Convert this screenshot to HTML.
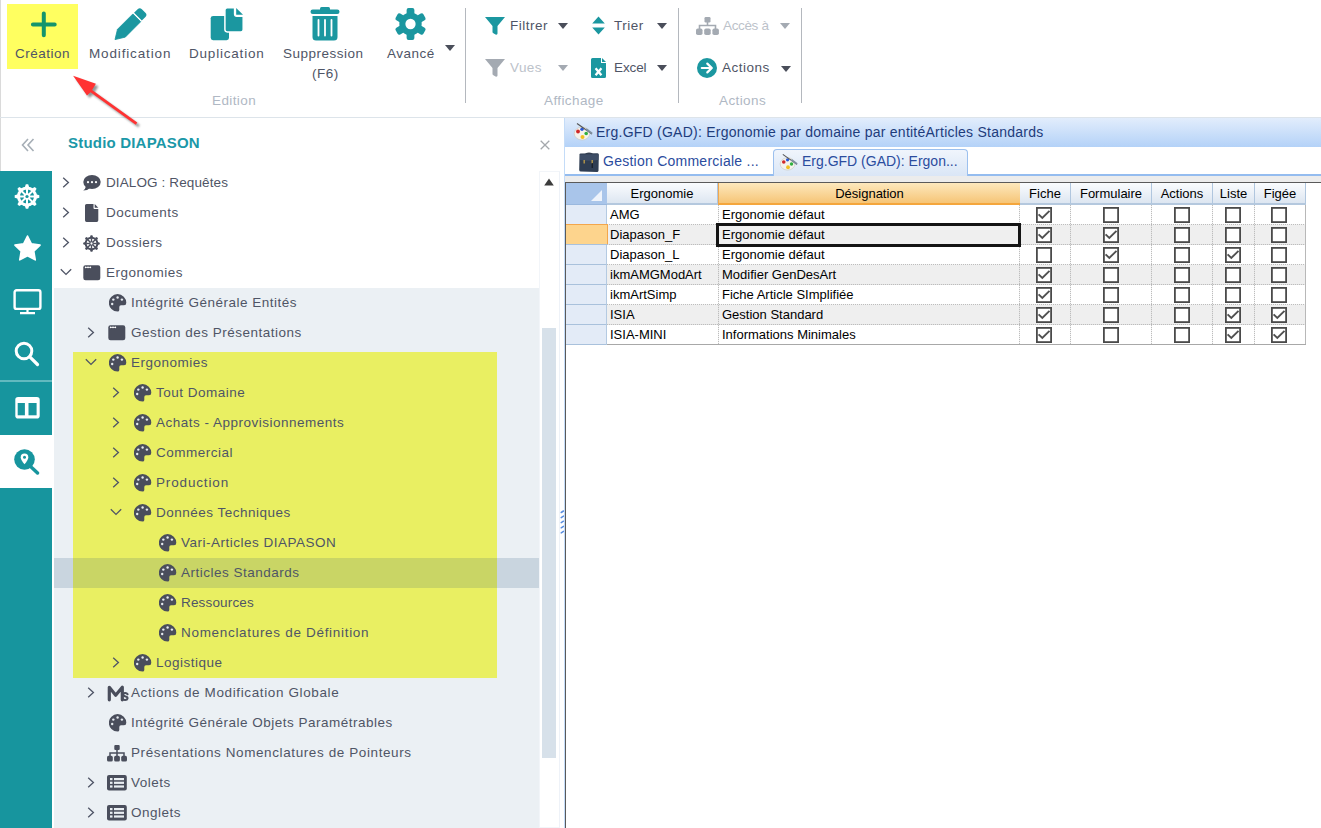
<!DOCTYPE html>
<html><head><meta charset="utf-8">
<style>
*{margin:0;padding:0;box-sizing:border-box}
html,body{width:1321px;height:828px;overflow:hidden;background:#fff;font-family:"Liberation Sans",sans-serif;position:relative}
.a{position:absolute}
.tb{font-size:13.5px;color:#4f5566;letter-spacing:0.5px;white-space:nowrap;line-height:16px}
.tl{font-size:13.5px;color:#b0b8c4;letter-spacing:0.4px;white-space:nowrap;line-height:16px}
.sep{position:absolute;width:1px;background:#b4b8be;top:8px;height:95px}
.car{position:absolute;width:0;height:0;border-left:5.5px solid transparent;border-right:5.5px solid transparent;border-top:6px solid #4a4e5a}
.car.g{border-top-color:#a4aab2}
.tr{position:absolute;left:54px;height:30px;width:485px}
.tt{position:absolute;font-size:13.5px;color:#4f5566;letter-spacing:0.5px;white-space:nowrap;line-height:16px;top:7px}
.ch{position:absolute;top:9px}
.ic{position:absolute;top:6px}
.g{font-size:13px;color:#000;white-space:nowrap;line-height:16px}
.hd{position:absolute;top:183px;height:22px;background:linear-gradient(#fbfcfe,#dfe7f1);border-bottom:2px solid #b4c8de;border-right:1px solid #b4c8de;font-size:13px;text-align:center;line-height:19px;color:#000}
.cb{position:absolute;width:16px;height:16px;border:2px solid #4e4e4e;background:#fff}
.rowbg{position:absolute;left:607px;width:699px;height:20px}
</style></head><body>

<!-- left thin border of toolbar -->
<div class="a" style="left:0;top:0;width:1px;height:171px;background:#dadada"></div>

<!-- Creation highlight -->
<div class="a" style="left:7px;top:4px;width:71px;height:65px;background:#ffff60"></div>

<!-- ===== TOOLBAR ===== -->
<svg class="a" style="left:29px;top:10px" width="30" height="30" viewBox="0 0 30 30">
  <path d="M14.8 3.6V25.3M3.9 14.4H25.7" stroke="#14956c" stroke-width="4" stroke-linecap="round"/>
</svg>
<div class="a tb" style="left:15px;top:46px">Création</div>

<!-- pencil -->
<svg class="a" style="left:114px;top:7px" width="34" height="34" viewBox="0 0 34 34">
  <path d="M1.00 32.60 L3.47 22.35 L18.89 6.93 L26.67 14.71 L11.25 30.13 Z" fill="#1b97a0" stroke="#1b97a0" stroke-width="0.8" stroke-linejoin="round"/>
  <path d="M20.02 5.80 L23.63 2.19 Q25.75 0.07 27.87 2.19 L31.41 5.73 Q33.53 7.85 31.41 9.97 L27.80 13.58 Z" fill="#1b97a0"/>
</svg>
<div class="a tb" style="left:89px;top:46px;letter-spacing:0.85px">Modification</div>

<!-- copy -->
<svg class="a" style="left:210px;top:7px" width="34" height="34" viewBox="0 0 34 34">
  <rect x="0.7" y="8.9" width="18.3" height="24.3" rx="2.4" fill="#1b97a0"/>
  <path d="M17.2 0.7 H24.6 V7 Q24.6 9.2 26.8 9.2 H33.2 V22.6 Q33.2 24.9 31 24.9 H17.2 Q14.9 24.9 14.9 22.6 V3 Q14.9 0.7 17.2 0.7Z" fill="#1b97a0" stroke="#fff" stroke-width="1.5"/>
  <path d="M26.2 1 L33 7.8 H26.2Z" fill="#1b97a0"/>
</svg>
<div class="a tb" style="left:189px;top:46px;letter-spacing:0.8px">Duplication</div>

<!-- trash -->
<svg class="a" style="left:310px;top:7px" width="30" height="34" viewBox="0 0 30 34">
  <rect x="0.5" y="2.5" width="29" height="4.5" rx="2.2" fill="#1b97a0"/>
  <rect x="10" y="0" width="10" height="4" rx="1.5" fill="#1b97a0"/>
  <path d="M2.5 9 H27.5 V30 Q27.5 33.5 24 33.5 H6 Q2.5 33.5 2.5 30Z" fill="#1b97a0"/>
  <path d="M8.5 13 V28.5 M15 13 V28.5 M21.5 13 V28.5" stroke="#fff" stroke-width="1.8" stroke-linecap="round"/>
</svg>
<div class="a tb" style="left:283px;top:46px">Suppression</div>
<div class="a tb" style="left:312px;top:66px">(F6)</div>

<!-- gear -->
<svg class="a" style="left:394px;top:7px" width="33" height="34" viewBox="-17 -17 34 34">
  <g fill="#1b97a0">
    <circle r="11.5"/>
    <g id="tooth"><rect x="-4" y="-16.5" width="8" height="8" rx="2"/></g>
    <use href="#tooth" transform="rotate(60)"/><use href="#tooth" transform="rotate(120)"/>
    <use href="#tooth" transform="rotate(180)"/><use href="#tooth" transform="rotate(240)"/><use href="#tooth" transform="rotate(300)"/>
  </g>
  <circle r="5.3" fill="#fff"/>
</svg>
<div class="a tb" style="left:387px;top:46px">Avancé</div>
<div class="car" style="left:445px;top:45px"></div>

<div class="a tl" style="left:212px;top:93px">Edition</div>
<div class="sep" style="left:465px"></div>

<!-- Affichage group -->
<svg class="a" style="left:485px;top:17px" width="20" height="18" viewBox="0 0 20 18">
  <path d="M0 0 H20 L12.5 9 V16.5 Q12.5 18 10.5 17.5 L8 16 Q7.5 15.6 7.5 15 V9 Z" fill="#1b97a0"/>
</svg>
<div class="a tb" style="left:510px;top:18px">Filtrer</div>
<div class="car" style="left:558px;top:23px"></div>

<svg class="a" style="left:592px;top:16px" width="13" height="19" viewBox="0 0 13 19">
  <path d="M6.5 0.5 L12.8 7.6 H0.2Z M6.5 18.5 L12.8 11.4 H0.2Z" fill="#1b97a0"/>
</svg>
<div class="a tb" style="left:614px;top:18px">Trier</div>
<div class="car" style="left:657px;top:23px"></div>

<svg class="a" style="left:485px;top:59px" width="20" height="18" viewBox="0 0 20 18">
  <path d="M0 0 H20 L12.5 9 V16.5 Q12.5 18 10.5 17.5 L8 16 Q7.5 15.6 7.5 15 V9 Z" fill="#a4aab2"/>
</svg>
<div class="a tl" style="left:510px;top:60px;color:#bcc2ca">Vues</div>
<div class="car g" style="left:558px;top:65px"></div>

<svg class="a" style="left:591px;top:58px" width="15" height="20" viewBox="0 0 15 20">
  <path d="M1.5 0 H10 V5 H15 V18.5 Q15 20 13.5 20 H1.5 Q0 20 0 18.5 V1.5 Q0 0 1.5 0Z" fill="#1b97a0"/>
  <path d="M11 0 L15 4 H11Z" fill="#1b97a0"/>
  <path d="M4.6 10.2 L10.4 17.2 M10.4 10.2 L4.6 17.2" stroke="#fff" stroke-width="2.3"/>
</svg>
<div class="a tb" style="left:614px;top:60px;letter-spacing:-0.1px">Excel</div>
<div class="car" style="left:657px;top:65px"></div>

<div class="a tl" style="left:544px;top:93px">Affichage</div>

<div class="sep" style="left:678px"></div>

<!-- Actions group -->
<svg class="a" style="left:696px;top:17px" width="23" height="18" viewBox="0 0 23 18">
  <g fill="#a4aab2">
    <rect x="8.5" y="0" width="6" height="5.5" rx="1.2"/>
    <path d="M11.5 5 V9 M3.5 12 V8.5 H19.5 V12" stroke="#a4aab2" stroke-width="1.6" fill="none"/>
    <rect x="0" y="11.5" width="6.5" height="6.5" rx="1.8"/>
    <rect x="8.2" y="11.5" width="6.5" height="6.5" rx="1.8"/>
    <rect x="16.4" y="11.5" width="6.5" height="6.5" rx="1.8"/>
  </g>
</svg>
<div class="a tl" style="left:723px;top:18px;color:#bcc2ca;letter-spacing:-0.35px">Accès à</div>
<div class="car g" style="left:780px;top:23px"></div>

<svg class="a" style="left:697px;top:58px" width="20" height="20" viewBox="0 0 20 20">
  <circle cx="10" cy="10" r="10" fill="#1b97a0"/>
  <path d="M4.8 10 H14.5 M10.3 5.6 L14.8 10 L10.3 14.4" stroke="#fff" stroke-width="2.2" fill="none" stroke-linecap="round" stroke-linejoin="round"/>
</svg>
<div class="a tb" style="left:722px;top:60px">Actions</div>
<div class="car" style="left:781px;top:66px"></div>

<div class="a tl" style="left:719px;top:93px">Actions</div>

<div class="sep" style="left:801px"></div>

<!-- horizontal separator -->
<div class="a" style="left:0;top:117px;width:1321px;height:1px;background:#dde4ea"></div>

<!-- ===== LEFT SIDEBAR ===== -->
<div class="a" style="left:0;top:171px;width:52px;height:657px;background:#17959e"></div>
<div class="a" style="left:0;top:380px;width:52px;height:2px;background:#62b9bf"></div>
<div class="a" style="left:0;top:435px;width:52px;height:53px;background:#fff"></div>

<!-- header -->
<svg class="a" style="left:21px;top:138px" width="14" height="14" viewBox="0 0 14 14">
  <path d="M7 1 L1.5 7 L7 13 M12.5 1 L7 7 L12.5 13" stroke="#a6aeb6" stroke-width="1.6" fill="none"/>
</svg>
<div class="a" style="left:68px;top:134px;font-size:15px;font-weight:bold;color:#1b98a8;white-space:nowrap;letter-spacing:0.2px;line-height:18px">Studio DIAPASON</div>
<svg class="a" style="left:540px;top:140px" width="10" height="10" viewBox="0 0 10 10">
  <path d="M0.7 0.7 L9.3 9.3 M9.3 0.7 L0.7 9.3" stroke="#a4a8ac" stroke-width="1.3"/>
</svg>

<!-- TREE placeholder -->

<!-- sidebar icons -->
<svg class="a" style="left:14px;top:183px" width="26" height="27" viewBox="-13 -13.5 26 27">
  <g fill="#fff"><path d="M-2.2 -9 L-1.2 -12.3 H1.2 L2.2 -9Z" transform="rotate(0)"/><path d="M-2.2 -9 L-1.2 -12.3 H1.2 L2.2 -9Z" transform="rotate(45)"/><path d="M-2.2 -9 L-1.2 -12.3 H1.2 L2.2 -9Z" transform="rotate(90)"/><path d="M-2.2 -9 L-1.2 -12.3 H1.2 L2.2 -9Z" transform="rotate(135)"/><path d="M-2.2 -9 L-1.2 -12.3 H1.2 L2.2 -9Z" transform="rotate(180)"/><path d="M-2.2 -9 L-1.2 -12.3 H1.2 L2.2 -9Z" transform="rotate(225)"/><path d="M-2.2 -9 L-1.2 -12.3 H1.2 L2.2 -9Z" transform="rotate(270)"/><path d="M-2.2 -9 L-1.2 -12.3 H1.2 L2.2 -9Z" transform="rotate(315)"/></g>
  <circle r="10" fill="#fff"/><circle r="5.1" fill="none" stroke="#17959e" stroke-width="3.8"/>
  <g stroke="#fff" stroke-width="2"><path d="M0 -2.5 V-7.6" transform="rotate(0)"/><path d="M0 -2.5 V-7.6" transform="rotate(45)"/><path d="M0 -2.5 V-7.6" transform="rotate(90)"/><path d="M0 -2.5 V-7.6" transform="rotate(135)"/><path d="M0 -2.5 V-7.6" transform="rotate(180)"/><path d="M0 -2.5 V-7.6" transform="rotate(225)"/><path d="M0 -2.5 V-7.6" transform="rotate(270)"/><path d="M0 -2.5 V-7.6" transform="rotate(315)"/></g>
  <circle r="1.6" fill="#17959e"/>
</svg>
<svg class="a" style="left:14px;top:235px" width="27" height="27" viewBox="0 0 27 27">
  <path d="M13.50 1.00 L17.38 8.86 L26.05 10.12 L19.78 16.24 L21.26 24.88 L13.50 20.80 L5.74 24.88 L7.22 16.24 L0.95 10.12 L9.62 8.86Z" fill="#fff" stroke="#fff" stroke-width="1.6" stroke-linejoin="round"/>
</svg>
<svg class="a" style="left:13px;top:289px" width="29" height="26" viewBox="0 0 29 26">
  <rect x="1.6" y="1.3" width="25.8" height="18.6" rx="2" fill="none" stroke="#fff" stroke-width="2.4"/>
  <path d="M14.5 20 V23.8 M7 24.2 H22" stroke="#fff" stroke-width="2.2"/>
</svg>
<svg class="a" style="left:14px;top:341px" width="26" height="26" viewBox="0 0 26 26">
  <circle cx="10" cy="10" r="7.8" fill="none" stroke="#fff" stroke-width="3"/>
  <path d="M15.8 15.8 L23.5 23.5" stroke="#fff" stroke-width="3.2" stroke-linecap="round"/>
</svg>
<svg class="a" style="left:15px;top:397px" width="25" height="22" viewBox="0 0 25 22">
  <rect x="0.3" y="0" width="24.4" height="21.5" rx="2.8" fill="#fff"/>
  <rect x="2.7" y="6" width="7.2" height="12.3" fill="#17959e"/><rect x="13.5" y="6" width="8.1" height="12.3" fill="#17959e"/>
</svg>
<svg class="a" style="left:14px;top:449px" width="26" height="26" viewBox="0 0 26 26">
  <circle cx="10.5" cy="10.5" r="10.3" fill="#17959e"/>
  <path d="M15.5 16.5 L23.5 24" stroke="#17959e" stroke-width="3.4" stroke-linecap="round"/>
  <path d="M10.5 4.5 Q14.3 4.5 14.3 8.2 Q14.3 10.8 10.5 15.2 Q6.7 10.8 6.7 8.2 Q6.7 4.5 10.5 4.5Z" fill="#fff"/>
  <circle cx="10.5" cy="8.3" r="1.5" fill="#17959e"/>
</svg>

<!-- scrollbar -->
<div class="a" style="left:539px;top:171px;width:21px;height:657px;border:1px solid #f2f5f9;border-right-color:#eef2f8"></div>
<svg class="a" style="left:544px;top:178px" width="10" height="8" viewBox="0 0 10 8"><path d="M5 0.5 L9.8 7.5 H0.2Z" fill="#3c3c3c"/></svg>
<div class="a" style="left:542px;top:328px;width:14px;height:430px;background:#d7e1ea"></div>
<!-- splitter dots -->
<svg class="a" style="left:560px;top:509px" width="5" height="26" viewBox="0 0 5 26">
  <g stroke="#5a8ee0" stroke-width="1.5" stroke-linecap="round"><path d="M1.2 3.5 L3.5 2"/><path d="M1.2 8.6 L3.5 7.1"/><path d="M1.2 13.7 L3.5 12.2"/><path d="M1.2 18.8 L3.5 17.3"/><path d="M1.2 23.9 L3.5 22.4"/></g>
</svg>

<!-- red arrow -->
<svg class="a" style="left:60px;top:65px" width="90" height="70" viewBox="60 65 90 70">
  <defs><filter id="sh" x="-20%" y="-20%" width="140%" height="140%"><feGaussianBlur stdDeviation="1.2"/></filter></defs>
  <g transform="translate(2.5,2.5)" filter="url(#sh)" opacity="0.55">
    <path d="M73.1 75.7 L95.9 83.8 L92.1 90 L137.3 122.5 L135.7 124.8 L90.5 92.3 L87 95.4Z" fill="#404040"/>
  </g>
  <path d="M73.1 75.7 L95.9 83.8 L92.1 90 L137.3 122.5 L135.7 124.8 L90.5 92.3 L87 95.4Z" fill="#ff3232"/>
</svg>

<!-- TREE START -->
<div class="a" style="left:54px;top:288px;width:485px;height:540px;background:#ebf0f4"></div>
<div class="a" style="left:54px;top:558px;width:485px;height:30px;background:#c9d5df"></div>
<div class="a" style="left:73px;top:352px;width:424px;height:326px;background:#e9ef62"></div>
<div class="a" style="left:73px;top:558px;width:424px;height:30px;background:#c9d565"></div>
<svg class="a" style="left:62px;top:177px" width="8" height="11" viewBox="0 0 8 11"><path d="M1.2 0.8 L6.4 5.5 L1.2 10.2" stroke="#4f5566" stroke-width="1.3" fill="none"/></svg>
<svg class="a" style="left:83px;top:175px" width="18" height="16" viewBox="0 0 18 16"><ellipse cx="9" cy="7" rx="8.7" ry="7" fill="#4a4e5c"/><path d="M3 11 Q2.5 14 0.2 15.6 Q4.5 15.5 7 13Z" fill="#4a4e5c"/><g fill="#fff"><circle cx="5" cy="7.2" r="1.1"/><circle cx="9" cy="7.2" r="1.1"/><circle cx="13" cy="7.2" r="1.1"/></g></svg>
<div class="a tt" style="left:106px;top:175px;letter-spacing:0.12px">DIALOG : Requêtes</div>
<svg class="a" style="left:62px;top:207px" width="8" height="11" viewBox="0 0 8 11"><path d="M1.2 0.8 L6.4 5.5 L1.2 10.2" stroke="#4f5566" stroke-width="1.3" fill="none"/></svg>
<svg class="a" style="left:85px;top:204px" width="14" height="18" viewBox="0 0 14 18"><path d="M1.6 0 H8.5 V4 Q8.5 5 9.5 5 H13.3 V16.2 Q13.3 17.9 11.7 17.9 H1.6 Q0 17.9 0 16.2 V1.6 Q0 0 1.6 0Z" fill="#4a4e5c"/><path d="M9.7 0 L13.3 3.7 H9.7Z" fill="#4a4e5c"/></svg>
<div class="a tt" style="left:106px;top:205px">Documents</div>
<svg class="a" style="left:62px;top:237px" width="8" height="11" viewBox="0 0 8 11"><path d="M1.2 0.8 L6.4 5.5 L1.2 10.2" stroke="#4f5566" stroke-width="1.3" fill="none"/></svg>
<svg class="a" style="left:83px;top:235px" width="17" height="17" viewBox="-9.8 -9.8 19.6 19.6"><g fill="#4a4e5c"><path d="M-1.8 -7.2 L-1 -9.6 H1 L1.8 -7.2Z" transform="rotate(0)"/><path d="M-1.8 -7.2 L-1 -9.6 H1 L1.8 -7.2Z" transform="rotate(45)"/><path d="M-1.8 -7.2 L-1 -9.6 H1 L1.8 -7.2Z" transform="rotate(90)"/><path d="M-1.8 -7.2 L-1 -9.6 H1 L1.8 -7.2Z" transform="rotate(135)"/><path d="M-1.8 -7.2 L-1 -9.6 H1 L1.8 -7.2Z" transform="rotate(180)"/><path d="M-1.8 -7.2 L-1 -9.6 H1 L1.8 -7.2Z" transform="rotate(225)"/><path d="M-1.8 -7.2 L-1 -9.6 H1 L1.8 -7.2Z" transform="rotate(270)"/><path d="M-1.8 -7.2 L-1 -9.6 H1 L1.8 -7.2Z" transform="rotate(315)"/></g><circle r="7.9" fill="#4a4e5c"/><circle r="4.1" fill="none" stroke="#fff" stroke-width="3"/><g stroke="#4a4e5c" stroke-width="1.6"><path d="M0 -2 V-6" transform="rotate(0)"/><path d="M0 -2 V-6" transform="rotate(45)"/><path d="M0 -2 V-6" transform="rotate(90)"/><path d="M0 -2 V-6" transform="rotate(135)"/><path d="M0 -2 V-6" transform="rotate(180)"/><path d="M0 -2 V-6" transform="rotate(225)"/><path d="M0 -2 V-6" transform="rotate(270)"/><path d="M0 -2 V-6" transform="rotate(315)"/></g><circle r="1.3" fill="#fff"/></svg>
<div class="a tt" style="left:106px;top:235px">Dossiers</div>
<svg class="a" style="left:60px;top:268px" width="12" height="8" viewBox="0 0 12 8"><path d="M0.8 1.2 L6 6.4 L11.2 1.2" stroke="#4f5566" stroke-width="1.3" fill="none"/></svg>
<svg class="a" style="left:83px;top:265px" width="18" height="16" viewBox="0 0 18 16"><rect x="0.3" y="0.2" width="17" height="15" rx="2.2" fill="#4a4e5c"/><g fill="#fff"><circle cx="2.6" cy="2.4" r="0.8"/><circle cx="5" cy="2.4" r="0.8"/><circle cx="7.4" cy="2.4" r="0.8"/></g><path d="M2.6 2.4 H7.4" stroke="#fff" stroke-width="0.8"/></svg>
<div class="a tt" style="left:106px;top:265px">Ergonomies</div>
<svg class="a" style="left:109px;top:294px" width="18" height="18" viewBox="0 0 18 18"><path d="M8.6 0.1 A8.7 8.7 0 0 1 17.3 8.8 Q17.3 11.3 15 11.3 L12 11.3 Q10.3 11.3 10.3 13 L10.3 16 Q10.3 17.6 8.6 17.6 A8.7 8.7 0 0 1 8.6 0.1Z" fill="#4a4e5c"/><g fill="#e6ebf0"><circle cx="4.3" cy="5.6" r="1.2"/><circle cx="8.6" cy="3.5" r="1.2"/><circle cx="12.9" cy="5.6" r="1.2"/><circle cx="3.2" cy="10" r="1.2"/></g></svg>
<div class="a tt" style="left:131px;top:295px">Intégrité Générale Entités</div>
<svg class="a" style="left:87px;top:327px" width="8" height="11" viewBox="0 0 8 11"><path d="M1.2 0.8 L6.4 5.5 L1.2 10.2" stroke="#4f5566" stroke-width="1.3" fill="none"/></svg>
<svg class="a" style="left:108px;top:325px" width="18" height="16" viewBox="0 0 18 16"><rect x="0.3" y="0.2" width="17" height="15" rx="2.2" fill="#4a4e5c"/><g fill="#fff"><circle cx="2.6" cy="2.4" r="0.8"/><circle cx="5" cy="2.4" r="0.8"/><circle cx="7.4" cy="2.4" r="0.8"/></g><path d="M2.6 2.4 H7.4" stroke="#fff" stroke-width="0.8"/></svg>
<div class="a tt" style="left:131px;top:325px">Gestion des Présentations</div>
<svg class="a" style="left:85px;top:358px" width="12" height="8" viewBox="0 0 12 8"><path d="M0.8 1.2 L6 6.4 L11.2 1.2" stroke="#4f5566" stroke-width="1.3" fill="none"/></svg>
<svg class="a" style="left:109px;top:354px" width="18" height="18" viewBox="0 0 18 18"><path d="M8.6 0.1 A8.7 8.7 0 0 1 17.3 8.8 Q17.3 11.3 15 11.3 L12 11.3 Q10.3 11.3 10.3 13 L10.3 16 Q10.3 17.6 8.6 17.6 A8.7 8.7 0 0 1 8.6 0.1Z" fill="#4a4e5c"/><g fill="#e6ebf0"><circle cx="4.3" cy="5.6" r="1.2"/><circle cx="8.6" cy="3.5" r="1.2"/><circle cx="12.9" cy="5.6" r="1.2"/><circle cx="3.2" cy="10" r="1.2"/></g></svg>
<div class="a tt" style="left:131px;top:355px">Ergonomies</div>
<svg class="a" style="left:112px;top:387px" width="8" height="11" viewBox="0 0 8 11"><path d="M1.2 0.8 L6.4 5.5 L1.2 10.2" stroke="#4f5566" stroke-width="1.3" fill="none"/></svg>
<svg class="a" style="left:134px;top:384px" width="18" height="18" viewBox="0 0 18 18"><path d="M8.6 0.1 A8.7 8.7 0 0 1 17.3 8.8 Q17.3 11.3 15 11.3 L12 11.3 Q10.3 11.3 10.3 13 L10.3 16 Q10.3 17.6 8.6 17.6 A8.7 8.7 0 0 1 8.6 0.1Z" fill="#4a4e5c"/><g fill="#e6ebf0"><circle cx="4.3" cy="5.6" r="1.2"/><circle cx="8.6" cy="3.5" r="1.2"/><circle cx="12.9" cy="5.6" r="1.2"/><circle cx="3.2" cy="10" r="1.2"/></g></svg>
<div class="a tt" style="left:156px;top:385px">Tout Domaine</div>
<svg class="a" style="left:112px;top:417px" width="8" height="11" viewBox="0 0 8 11"><path d="M1.2 0.8 L6.4 5.5 L1.2 10.2" stroke="#4f5566" stroke-width="1.3" fill="none"/></svg>
<svg class="a" style="left:134px;top:414px" width="18" height="18" viewBox="0 0 18 18"><path d="M8.6 0.1 A8.7 8.7 0 0 1 17.3 8.8 Q17.3 11.3 15 11.3 L12 11.3 Q10.3 11.3 10.3 13 L10.3 16 Q10.3 17.6 8.6 17.6 A8.7 8.7 0 0 1 8.6 0.1Z" fill="#4a4e5c"/><g fill="#e6ebf0"><circle cx="4.3" cy="5.6" r="1.2"/><circle cx="8.6" cy="3.5" r="1.2"/><circle cx="12.9" cy="5.6" r="1.2"/><circle cx="3.2" cy="10" r="1.2"/></g></svg>
<div class="a tt" style="left:156px;top:415px">Achats - Approvisionnements</div>
<svg class="a" style="left:112px;top:447px" width="8" height="11" viewBox="0 0 8 11"><path d="M1.2 0.8 L6.4 5.5 L1.2 10.2" stroke="#4f5566" stroke-width="1.3" fill="none"/></svg>
<svg class="a" style="left:134px;top:444px" width="18" height="18" viewBox="0 0 18 18"><path d="M8.6 0.1 A8.7 8.7 0 0 1 17.3 8.8 Q17.3 11.3 15 11.3 L12 11.3 Q10.3 11.3 10.3 13 L10.3 16 Q10.3 17.6 8.6 17.6 A8.7 8.7 0 0 1 8.6 0.1Z" fill="#4a4e5c"/><g fill="#e6ebf0"><circle cx="4.3" cy="5.6" r="1.2"/><circle cx="8.6" cy="3.5" r="1.2"/><circle cx="12.9" cy="5.6" r="1.2"/><circle cx="3.2" cy="10" r="1.2"/></g></svg>
<div class="a tt" style="left:156px;top:445px">Commercial</div>
<svg class="a" style="left:112px;top:477px" width="8" height="11" viewBox="0 0 8 11"><path d="M1.2 0.8 L6.4 5.5 L1.2 10.2" stroke="#4f5566" stroke-width="1.3" fill="none"/></svg>
<svg class="a" style="left:134px;top:474px" width="18" height="18" viewBox="0 0 18 18"><path d="M8.6 0.1 A8.7 8.7 0 0 1 17.3 8.8 Q17.3 11.3 15 11.3 L12 11.3 Q10.3 11.3 10.3 13 L10.3 16 Q10.3 17.6 8.6 17.6 A8.7 8.7 0 0 1 8.6 0.1Z" fill="#4a4e5c"/><g fill="#e6ebf0"><circle cx="4.3" cy="5.6" r="1.2"/><circle cx="8.6" cy="3.5" r="1.2"/><circle cx="12.9" cy="5.6" r="1.2"/><circle cx="3.2" cy="10" r="1.2"/></g></svg>
<div class="a tt" style="left:156px;top:475px;letter-spacing:0.85px">Production</div>
<svg class="a" style="left:110px;top:508px" width="12" height="8" viewBox="0 0 12 8"><path d="M0.8 1.2 L6 6.4 L11.2 1.2" stroke="#4f5566" stroke-width="1.3" fill="none"/></svg>
<svg class="a" style="left:134px;top:504px" width="18" height="18" viewBox="0 0 18 18"><path d="M8.6 0.1 A8.7 8.7 0 0 1 17.3 8.8 Q17.3 11.3 15 11.3 L12 11.3 Q10.3 11.3 10.3 13 L10.3 16 Q10.3 17.6 8.6 17.6 A8.7 8.7 0 0 1 8.6 0.1Z" fill="#4a4e5c"/><g fill="#e6ebf0"><circle cx="4.3" cy="5.6" r="1.2"/><circle cx="8.6" cy="3.5" r="1.2"/><circle cx="12.9" cy="5.6" r="1.2"/><circle cx="3.2" cy="10" r="1.2"/></g></svg>
<div class="a tt" style="left:156px;top:505px">Données Techniques</div>
<svg class="a" style="left:159px;top:534px" width="18" height="18" viewBox="0 0 18 18"><path d="M8.6 0.1 A8.7 8.7 0 0 1 17.3 8.8 Q17.3 11.3 15 11.3 L12 11.3 Q10.3 11.3 10.3 13 L10.3 16 Q10.3 17.6 8.6 17.6 A8.7 8.7 0 0 1 8.6 0.1Z" fill="#4a4e5c"/><g fill="#e6ebf0"><circle cx="4.3" cy="5.6" r="1.2"/><circle cx="8.6" cy="3.5" r="1.2"/><circle cx="12.9" cy="5.6" r="1.2"/><circle cx="3.2" cy="10" r="1.2"/></g></svg>
<div class="a tt" style="left:181px;top:535px">Vari-Articles DIAPASON</div>
<svg class="a" style="left:159px;top:564px" width="18" height="18" viewBox="0 0 18 18"><path d="M8.6 0.1 A8.7 8.7 0 0 1 17.3 8.8 Q17.3 11.3 15 11.3 L12 11.3 Q10.3 11.3 10.3 13 L10.3 16 Q10.3 17.6 8.6 17.6 A8.7 8.7 0 0 1 8.6 0.1Z" fill="#4a4e5c"/><g fill="#e6ebf0"><circle cx="4.3" cy="5.6" r="1.2"/><circle cx="8.6" cy="3.5" r="1.2"/><circle cx="12.9" cy="5.6" r="1.2"/><circle cx="3.2" cy="10" r="1.2"/></g></svg>
<div class="a tt" style="left:181px;top:565px">Articles Standards</div>
<svg class="a" style="left:159px;top:594px" width="18" height="18" viewBox="0 0 18 18"><path d="M8.6 0.1 A8.7 8.7 0 0 1 17.3 8.8 Q17.3 11.3 15 11.3 L12 11.3 Q10.3 11.3 10.3 13 L10.3 16 Q10.3 17.6 8.6 17.6 A8.7 8.7 0 0 1 8.6 0.1Z" fill="#4a4e5c"/><g fill="#e6ebf0"><circle cx="4.3" cy="5.6" r="1.2"/><circle cx="8.6" cy="3.5" r="1.2"/><circle cx="12.9" cy="5.6" r="1.2"/><circle cx="3.2" cy="10" r="1.2"/></g></svg>
<div class="a tt" style="left:181px;top:595px;letter-spacing:0.16px">Ressources</div>
<svg class="a" style="left:159px;top:624px" width="18" height="18" viewBox="0 0 18 18"><path d="M8.6 0.1 A8.7 8.7 0 0 1 17.3 8.8 Q17.3 11.3 15 11.3 L12 11.3 Q10.3 11.3 10.3 13 L10.3 16 Q10.3 17.6 8.6 17.6 A8.7 8.7 0 0 1 8.6 0.1Z" fill="#4a4e5c"/><g fill="#e6ebf0"><circle cx="4.3" cy="5.6" r="1.2"/><circle cx="8.6" cy="3.5" r="1.2"/><circle cx="12.9" cy="5.6" r="1.2"/><circle cx="3.2" cy="10" r="1.2"/></g></svg>
<div class="a tt" style="left:181px;top:625px;letter-spacing:0.69px">Nomenclatures de Définition</div>
<svg class="a" style="left:112px;top:657px" width="8" height="11" viewBox="0 0 8 11"><path d="M1.2 0.8 L6.4 5.5 L1.2 10.2" stroke="#4f5566" stroke-width="1.3" fill="none"/></svg>
<svg class="a" style="left:134px;top:654px" width="18" height="18" viewBox="0 0 18 18"><path d="M8.6 0.1 A8.7 8.7 0 0 1 17.3 8.8 Q17.3 11.3 15 11.3 L12 11.3 Q10.3 11.3 10.3 13 L10.3 16 Q10.3 17.6 8.6 17.6 A8.7 8.7 0 0 1 8.6 0.1Z" fill="#4a4e5c"/><g fill="#e6ebf0"><circle cx="4.3" cy="5.6" r="1.2"/><circle cx="8.6" cy="3.5" r="1.2"/><circle cx="12.9" cy="5.6" r="1.2"/><circle cx="3.2" cy="10" r="1.2"/></g></svg>
<div class="a tt" style="left:156px;top:655px">Logistique</div>
<svg class="a" style="left:87px;top:687px" width="8" height="11" viewBox="0 0 8 11"><path d="M1.2 0.8 L6.4 5.5 L1.2 10.2" stroke="#4f5566" stroke-width="1.3" fill="none"/></svg>
<svg class="a" style="left:107px;top:685px" width="23" height="17" viewBox="0 0 23 17"><path d="M2.3 14.8 V2.3 L8.7 10.3 L15.3 2.3 V14.8" stroke="#4a4e5c" stroke-width="3.2" fill="none" stroke-linecap="round" stroke-linejoin="round"/><path d="M20.6 9.2 Q19.8 7.9 18.1 8 Q15.9 8.2 16.3 9.9 Q16.7 11.2 18.5 11.5 Q20.7 11.9 20.5 13.6 Q20.1 15.1 17.9 15 Q16.4 14.9 15.6 13.9" stroke="#4a4e5c" stroke-width="2.1" fill="none" stroke-linecap="round"/></svg>
<div class="a tt" style="left:131px;top:685px;letter-spacing:0.62px">Actions de Modification Globale</div>
<svg class="a" style="left:109px;top:714px" width="18" height="18" viewBox="0 0 18 18"><path d="M8.6 0.1 A8.7 8.7 0 0 1 17.3 8.8 Q17.3 11.3 15 11.3 L12 11.3 Q10.3 11.3 10.3 13 L10.3 16 Q10.3 17.6 8.6 17.6 A8.7 8.7 0 0 1 8.6 0.1Z" fill="#4a4e5c"/><g fill="#e6ebf0"><circle cx="4.3" cy="5.6" r="1.2"/><circle cx="8.6" cy="3.5" r="1.2"/><circle cx="12.9" cy="5.6" r="1.2"/><circle cx="3.2" cy="10" r="1.2"/></g></svg>
<div class="a tt" style="left:131px;top:715px">Intégrité Générale Objets Paramétrables</div>
<svg class="a" style="left:107px;top:745px" width="20" height="17" viewBox="0 0 20 17"><rect x="7.3" y="0" width="5.4" height="5" rx="1" fill="#4a4e5c"/><path d="M10 4.5 V8 M3 11 V8 H17 V11 M10 8 V11" stroke="#4a4e5c" stroke-width="1.5" fill="none"/><rect x="0" y="10.8" width="5.8" height="5.8" rx="1.6" fill="#4a4e5c"/><rect x="7.1" y="10.8" width="5.8" height="5.8" rx="1.6" fill="#4a4e5c"/><rect x="14.2" y="10.8" width="5.8" height="5.8" rx="1.6" fill="#4a4e5c"/></svg>
<div class="a tt" style="left:131px;top:745px;letter-spacing:0.6px">Présentations Nomenclatures de Pointeurs</div>
<svg class="a" style="left:87px;top:777px" width="8" height="11" viewBox="0 0 8 11"><path d="M1.2 0.8 L6.4 5.5 L1.2 10.2" stroke="#4f5566" stroke-width="1.3" fill="none"/></svg>
<svg class="a" style="left:107px;top:775px" width="20" height="16" viewBox="0 0 20 16"><rect x="0" y="0" width="19.8" height="15.5" rx="2" fill="#4a4e5c"/><g fill="#eaeff3"><rect x="3" y="3" width="2.5" height="2.2"/><rect x="3" y="6.7" width="2.5" height="2.2"/><rect x="3" y="10.4" width="2.5" height="2.2"/><rect x="7" y="3" width="10" height="2.2"/><rect x="7" y="6.7" width="10" height="2.2"/><rect x="7" y="10.4" width="10" height="2.2"/></g></svg>
<div class="a tt" style="left:131px;top:775px">Volets</div>
<svg class="a" style="left:87px;top:807px" width="8" height="11" viewBox="0 0 8 11"><path d="M1.2 0.8 L6.4 5.5 L1.2 10.2" stroke="#4f5566" stroke-width="1.3" fill="none"/></svg>
<svg class="a" style="left:107px;top:805px" width="20" height="16" viewBox="0 0 20 16"><rect x="0" y="0" width="19.8" height="15.5" rx="2" fill="#4a4e5c"/><g fill="#eaeff3"><rect x="3" y="3" width="2.5" height="2.2"/><rect x="3" y="6.7" width="2.5" height="2.2"/><rect x="3" y="10.4" width="2.5" height="2.2"/><rect x="7" y="3" width="10" height="2.2"/><rect x="7" y="6.7" width="10" height="2.2"/><rect x="7" y="10.4" width="10" height="2.2"/></g></svg>
<div class="a tt" style="left:131px;top:805px">Onglets</div>
<!-- TREE END -->

<!-- ===== RIGHT PANEL ===== -->
<!-- RIGHT START -->
<div class="a" style="left:564px;top:118px;width:1px;height:710px;background:#c4dcf8"></div>
<div class="a" style="left:565px;top:118px;width:756px;height:29px;background:linear-gradient(#e2edfc,#b4d2f8)"></div>
<svg class="a" style="left:573px;top:122px" width="20" height="20" viewBox="0 0 20 20"><ellipse cx="9" cy="11.5" rx="7.8" ry="6.5" fill="#f4f2ec" stroke="#c8c4bc" stroke-width="0.6"/><circle cx="5" cy="9.5" r="1.9" fill="#d02828"/><circle cx="9" cy="7.2" r="1.7" fill="#2a5ad8"/><circle cx="13.2" cy="11.5" r="1.8" fill="#30b040"/><circle cx="9.5" cy="15" r="2" fill="#f0c020"/><path d="M4 1.5 L19 12" stroke="#555" stroke-width="1.1"/><path d="M13 7 L19 11.5" stroke="#8090a0" stroke-width="2"/></svg>
<div class="a" style="left:596px;top:124px;font-size:14px;letter-spacing:0.24px;color:#1e3c7c;white-space:nowrap;line-height:17px">Erg.GFD (GAD): Ergonomie par domaine par entitéArticles Standards</div>
<div class="a" style="left:565px;top:174px;width:756px;height:2px;background:#94bcef"></div>
<div class="a" style="left:565px;top:176px;width:756px;height:6px;background:#ececec"></div>
<svg class="a" style="left:578px;top:151px" width="22" height="22" viewBox="0 0 22 22"><path d="M7.5 2.2 Q11 0.8 14.5 2.2 V3 H7.5Z" fill="#3a4250"/><path d="M1.5 4 Q1 3 2.5 2.6 L19.5 2.2 Q21 2.3 20.8 4 L20.5 19.8 Q20.3 21 19 21 L3 20.6 Q1.2 20.5 1.2 19Z" fill="#2f3d52"/><path d="M2 3.5 L20.5 3.2 L20.3 9 Q11 10.5 2 9Z" fill="#3d4d66"/><rect x="5.5" y="9" width="1.4" height="3.5" fill="#b89848"/><rect x="13.5" y="9" width="1.4" height="3.5" fill="#b89848"/><rect x="13.7" y="12" width="1" height="5" fill="#10151c"/></svg>
<div class="a" style="left:603px;top:153px;font-size:14px;color:#2b4c9e;white-space:nowrap;line-height:17px;letter-spacing:0.25px">Gestion Commerciale ...</div>
<div class="a" style="left:773px;top:149px;width:195px;height:27px;border:1px solid #9cc0ee;border-bottom:none;border-radius:4px 4px 0 0;background:linear-gradient(#f0f5fc,#dae6f6)"></div>
<svg class="a" style="left:779px;top:153px" width="19" height="19" viewBox="0 0 20 20"><ellipse cx="9" cy="11.5" rx="7.8" ry="6.5" fill="#f4f2ec" stroke="#c8c4bc" stroke-width="0.6"/><circle cx="5" cy="9.5" r="1.9" fill="#d02828"/><circle cx="9" cy="7.2" r="1.7" fill="#2a5ad8"/><circle cx="13.2" cy="11.5" r="1.8" fill="#30b040"/><circle cx="9.5" cy="15" r="2" fill="#f0c020"/><path d="M4 1.5 L19 12" stroke="#555" stroke-width="1.1"/><path d="M13 7 L19 11.5" stroke="#8090a0" stroke-width="2"/></svg>
<div class="a" style="left:802px;top:153px;font-size:14px;color:#2b4c9e;white-space:nowrap;line-height:17px">Erg.GFD (GAD): Ergon...</div>
<div class="a" style="left:565px;top:182px;width:756px;height:1px;background:#5a5a5a"></div>
<div class="a" style="left:565px;top:182px;width:1px;height:646px;background:#5a5a5a"></div>
<div class="a" style="left:566px;top:183px;width:41px;height:22px;background:#a9c5ea;border-bottom:1px solid #9ab8de"></div>
<svg class="a" style="left:591px;top:190px" width="11" height="11" viewBox="0 0 11 11"><path d="M11 0 V11 H0Z" fill="#eef3fb"/></svg>
<div class="a" style="left:607px;top:183px;width:111px;height:22px;background:linear-gradient(#fafcfe,#dde6f1);border-right:1px solid #b0c6de;border-bottom:2px solid #b4c8de;font-size:13px;text-align:center;line-height:21px;color:#000">Ergonomie</div>
<div class="a" style="left:718px;top:183px;width:302px;height:22px;background:linear-gradient(#fde8bd,#f6c577);border-left:1px solid #f0a850;border-bottom:2px solid #f4a63c;font-size:13px;text-align:center;line-height:21px;color:#000">Désignation</div>
<div class="a" style="left:1020px;top:183px;width:51px;height:22px;background:linear-gradient(#fafcfe,#dde6f1);border-right:1px solid #b0c6de;border-bottom:2px solid #b4c8de;font-size:13px;text-align:center;line-height:21px;color:#000">Fiche</div>
<div class="a" style="left:1071px;top:183px;width:81px;height:22px;background:linear-gradient(#fafcfe,#dde6f1);border-right:1px solid #b0c6de;border-bottom:2px solid #b4c8de;font-size:13px;text-align:center;line-height:21px;color:#000">Formulaire</div>
<div class="a" style="left:1152px;top:183px;width:61px;height:22px;background:linear-gradient(#fafcfe,#dde6f1);border-right:1px solid #b0c6de;border-bottom:2px solid #b4c8de;font-size:13px;text-align:center;line-height:21px;color:#000">Actions</div>
<div class="a" style="left:1213px;top:183px;width:42px;height:22px;background:linear-gradient(#fafcfe,#dde6f1);border-right:1px solid #b0c6de;border-bottom:2px solid #b4c8de;font-size:13px;text-align:center;line-height:21px;color:#000">Liste</div>
<div class="a" style="left:1255px;top:183px;width:51px;height:22px;background:linear-gradient(#fafcfe,#dde6f1);border-right:1px solid #b0c6de;border-bottom:2px solid #b4c8de;font-size:13px;text-align:center;line-height:21px;color:#000">Figée</div>
<div class="a" style="left:566px;top:205px;width:40px;height:20px;background:#e3ebf7;border-bottom:1px solid #a9c1dc"></div>
<div class="a" style="left:606px;top:205px;width:1px;height:20px;background:#b4cae2"></div>
<div class="a" style="left:607px;top:224px;width:699px;height:1px;background:repeating-linear-gradient(90deg,#bdbdbd 0 1px,rgba(0,0,0,0.05) 1px 2px)"></div>
<div class="a g" style="left:610px;top:207px">AMG</div>
<div class="a g" style="left:722px;top:207px">Ergonomie défaut</div>
<svg class="a" style="left:1036px;top:207px" width="16" height="16" viewBox="0 0 16 16"><rect x="0.9" y="0.9" width="14.2" height="14.2" fill="#fff" stroke="#4a4a4a" stroke-width="1.8"/><path d="M2.6 7.4 L6.3 11 L13.5 3.8" stroke="#505050" stroke-width="1.9" fill="none"/></svg>
<svg class="a" style="left:1103px;top:207px" width="16" height="16" viewBox="0 0 16 16"><rect x="0.9" y="0.9" width="14.2" height="14.2" fill="#fff" stroke="#4a4a4a" stroke-width="1.8"/></svg>
<svg class="a" style="left:1174px;top:207px" width="16" height="16" viewBox="0 0 16 16"><rect x="0.9" y="0.9" width="14.2" height="14.2" fill="#fff" stroke="#4a4a4a" stroke-width="1.8"/></svg>
<svg class="a" style="left:1225px;top:207px" width="16" height="16" viewBox="0 0 16 16"><rect x="0.9" y="0.9" width="14.2" height="14.2" fill="#fff" stroke="#4a4a4a" stroke-width="1.8"/></svg>
<svg class="a" style="left:1271px;top:207px" width="16" height="16" viewBox="0 0 16 16"><rect x="0.9" y="0.9" width="14.2" height="14.2" fill="#fff" stroke="#4a4a4a" stroke-width="1.8"/></svg>
<div class="a" style="left:607px;top:225px;width:699px;height:20px;background:#efefef"></div>
<div class="a" style="left:566px;top:224px;width:42px;height:21px;background:#fdd48d;border-top:1px solid #f3a64c;border-right:1px solid #f3a64c;border-bottom:1px solid #a9c1dc"></div>
<div class="a" style="left:607px;top:244px;width:699px;height:1px;background:repeating-linear-gradient(90deg,#bdbdbd 0 1px,rgba(0,0,0,0.05) 1px 2px)"></div>
<div class="a g" style="left:610px;top:227px">Diapason_F</div>
<div class="a g" style="left:722px;top:227px">Ergonomie défaut</div>
<svg class="a" style="left:1036px;top:227px" width="16" height="16" viewBox="0 0 16 16"><rect x="0.9" y="0.9" width="14.2" height="14.2" fill="#fff" stroke="#4a4a4a" stroke-width="1.8"/><path d="M2.6 7.4 L6.3 11 L13.5 3.8" stroke="#505050" stroke-width="1.9" fill="none"/></svg>
<svg class="a" style="left:1103px;top:227px" width="16" height="16" viewBox="0 0 16 16"><rect x="0.9" y="0.9" width="14.2" height="14.2" fill="#fff" stroke="#4a4a4a" stroke-width="1.8"/><path d="M2.6 7.4 L6.3 11 L13.5 3.8" stroke="#505050" stroke-width="1.9" fill="none"/></svg>
<svg class="a" style="left:1174px;top:227px" width="16" height="16" viewBox="0 0 16 16"><rect x="0.9" y="0.9" width="14.2" height="14.2" fill="#fff" stroke="#4a4a4a" stroke-width="1.8"/></svg>
<svg class="a" style="left:1225px;top:227px" width="16" height="16" viewBox="0 0 16 16"><rect x="0.9" y="0.9" width="14.2" height="14.2" fill="#fff" stroke="#4a4a4a" stroke-width="1.8"/></svg>
<svg class="a" style="left:1271px;top:227px" width="16" height="16" viewBox="0 0 16 16"><rect x="0.9" y="0.9" width="14.2" height="14.2" fill="#fff" stroke="#4a4a4a" stroke-width="1.8"/></svg>
<div class="a" style="left:566px;top:245px;width:40px;height:20px;background:#e3ebf7;border-bottom:1px solid #a9c1dc"></div>
<div class="a" style="left:606px;top:245px;width:1px;height:20px;background:#b4cae2"></div>
<div class="a" style="left:607px;top:264px;width:699px;height:1px;background:repeating-linear-gradient(90deg,#bdbdbd 0 1px,rgba(0,0,0,0.05) 1px 2px)"></div>
<div class="a g" style="left:610px;top:247px">Diapason_L</div>
<div class="a g" style="left:722px;top:247px">Ergonomie défaut</div>
<svg class="a" style="left:1036px;top:247px" width="16" height="16" viewBox="0 0 16 16"><rect x="0.9" y="0.9" width="14.2" height="14.2" fill="#fff" stroke="#4a4a4a" stroke-width="1.8"/></svg>
<svg class="a" style="left:1103px;top:247px" width="16" height="16" viewBox="0 0 16 16"><rect x="0.9" y="0.9" width="14.2" height="14.2" fill="#fff" stroke="#4a4a4a" stroke-width="1.8"/><path d="M2.6 7.4 L6.3 11 L13.5 3.8" stroke="#505050" stroke-width="1.9" fill="none"/></svg>
<svg class="a" style="left:1174px;top:247px" width="16" height="16" viewBox="0 0 16 16"><rect x="0.9" y="0.9" width="14.2" height="14.2" fill="#fff" stroke="#4a4a4a" stroke-width="1.8"/></svg>
<svg class="a" style="left:1225px;top:247px" width="16" height="16" viewBox="0 0 16 16"><rect x="0.9" y="0.9" width="14.2" height="14.2" fill="#fff" stroke="#4a4a4a" stroke-width="1.8"/><path d="M2.6 7.4 L6.3 11 L13.5 3.8" stroke="#505050" stroke-width="1.9" fill="none"/></svg>
<svg class="a" style="left:1271px;top:247px" width="16" height="16" viewBox="0 0 16 16"><rect x="0.9" y="0.9" width="14.2" height="14.2" fill="#fff" stroke="#4a4a4a" stroke-width="1.8"/></svg>
<div class="a" style="left:607px;top:265px;width:699px;height:20px;background:#efefef"></div>
<div class="a" style="left:566px;top:265px;width:40px;height:20px;background:#e3ebf7;border-bottom:1px solid #a9c1dc"></div>
<div class="a" style="left:606px;top:265px;width:1px;height:20px;background:#b4cae2"></div>
<div class="a" style="left:607px;top:284px;width:699px;height:1px;background:repeating-linear-gradient(90deg,#bdbdbd 0 1px,rgba(0,0,0,0.05) 1px 2px)"></div>
<div class="a g" style="left:610px;top:267px">ikmAMGModArt</div>
<div class="a g" style="left:722px;top:267px">Modifier GenDesArt</div>
<svg class="a" style="left:1036px;top:267px" width="16" height="16" viewBox="0 0 16 16"><rect x="0.9" y="0.9" width="14.2" height="14.2" fill="#fff" stroke="#4a4a4a" stroke-width="1.8"/><path d="M2.6 7.4 L6.3 11 L13.5 3.8" stroke="#505050" stroke-width="1.9" fill="none"/></svg>
<svg class="a" style="left:1103px;top:267px" width="16" height="16" viewBox="0 0 16 16"><rect x="0.9" y="0.9" width="14.2" height="14.2" fill="#fff" stroke="#4a4a4a" stroke-width="1.8"/></svg>
<svg class="a" style="left:1174px;top:267px" width="16" height="16" viewBox="0 0 16 16"><rect x="0.9" y="0.9" width="14.2" height="14.2" fill="#fff" stroke="#4a4a4a" stroke-width="1.8"/></svg>
<svg class="a" style="left:1225px;top:267px" width="16" height="16" viewBox="0 0 16 16"><rect x="0.9" y="0.9" width="14.2" height="14.2" fill="#fff" stroke="#4a4a4a" stroke-width="1.8"/></svg>
<svg class="a" style="left:1271px;top:267px" width="16" height="16" viewBox="0 0 16 16"><rect x="0.9" y="0.9" width="14.2" height="14.2" fill="#fff" stroke="#4a4a4a" stroke-width="1.8"/></svg>
<div class="a" style="left:566px;top:285px;width:40px;height:20px;background:#e3ebf7;border-bottom:1px solid #a9c1dc"></div>
<div class="a" style="left:606px;top:285px;width:1px;height:20px;background:#b4cae2"></div>
<div class="a" style="left:607px;top:304px;width:699px;height:1px;background:repeating-linear-gradient(90deg,#bdbdbd 0 1px,rgba(0,0,0,0.05) 1px 2px)"></div>
<div class="a g" style="left:610px;top:287px">ikmArtSimp</div>
<div class="a g" style="left:722px;top:287px">Fiche Article SImplifiée</div>
<svg class="a" style="left:1036px;top:287px" width="16" height="16" viewBox="0 0 16 16"><rect x="0.9" y="0.9" width="14.2" height="14.2" fill="#fff" stroke="#4a4a4a" stroke-width="1.8"/><path d="M2.6 7.4 L6.3 11 L13.5 3.8" stroke="#505050" stroke-width="1.9" fill="none"/></svg>
<svg class="a" style="left:1103px;top:287px" width="16" height="16" viewBox="0 0 16 16"><rect x="0.9" y="0.9" width="14.2" height="14.2" fill="#fff" stroke="#4a4a4a" stroke-width="1.8"/></svg>
<svg class="a" style="left:1174px;top:287px" width="16" height="16" viewBox="0 0 16 16"><rect x="0.9" y="0.9" width="14.2" height="14.2" fill="#fff" stroke="#4a4a4a" stroke-width="1.8"/></svg>
<svg class="a" style="left:1225px;top:287px" width="16" height="16" viewBox="0 0 16 16"><rect x="0.9" y="0.9" width="14.2" height="14.2" fill="#fff" stroke="#4a4a4a" stroke-width="1.8"/></svg>
<svg class="a" style="left:1271px;top:287px" width="16" height="16" viewBox="0 0 16 16"><rect x="0.9" y="0.9" width="14.2" height="14.2" fill="#fff" stroke="#4a4a4a" stroke-width="1.8"/></svg>
<div class="a" style="left:607px;top:305px;width:699px;height:20px;background:#efefef"></div>
<div class="a" style="left:566px;top:305px;width:40px;height:20px;background:#e3ebf7;border-bottom:1px solid #a9c1dc"></div>
<div class="a" style="left:606px;top:305px;width:1px;height:20px;background:#b4cae2"></div>
<div class="a" style="left:607px;top:324px;width:699px;height:1px;background:repeating-linear-gradient(90deg,#bdbdbd 0 1px,rgba(0,0,0,0.05) 1px 2px)"></div>
<div class="a g" style="left:610px;top:307px">ISIA</div>
<div class="a g" style="left:722px;top:307px">Gestion Standard</div>
<svg class="a" style="left:1036px;top:307px" width="16" height="16" viewBox="0 0 16 16"><rect x="0.9" y="0.9" width="14.2" height="14.2" fill="#fff" stroke="#4a4a4a" stroke-width="1.8"/><path d="M2.6 7.4 L6.3 11 L13.5 3.8" stroke="#505050" stroke-width="1.9" fill="none"/></svg>
<svg class="a" style="left:1103px;top:307px" width="16" height="16" viewBox="0 0 16 16"><rect x="0.9" y="0.9" width="14.2" height="14.2" fill="#fff" stroke="#4a4a4a" stroke-width="1.8"/></svg>
<svg class="a" style="left:1174px;top:307px" width="16" height="16" viewBox="0 0 16 16"><rect x="0.9" y="0.9" width="14.2" height="14.2" fill="#fff" stroke="#4a4a4a" stroke-width="1.8"/></svg>
<svg class="a" style="left:1225px;top:307px" width="16" height="16" viewBox="0 0 16 16"><rect x="0.9" y="0.9" width="14.2" height="14.2" fill="#fff" stroke="#4a4a4a" stroke-width="1.8"/><path d="M2.6 7.4 L6.3 11 L13.5 3.8" stroke="#505050" stroke-width="1.9" fill="none"/></svg>
<svg class="a" style="left:1271px;top:307px" width="16" height="16" viewBox="0 0 16 16"><rect x="0.9" y="0.9" width="14.2" height="14.2" fill="#fff" stroke="#4a4a4a" stroke-width="1.8"/><path d="M2.6 7.4 L6.3 11 L13.5 3.8" stroke="#505050" stroke-width="1.9" fill="none"/></svg>
<div class="a" style="left:566px;top:325px;width:40px;height:20px;background:#e3ebf7;border-bottom:1px solid #a9c1dc"></div>
<div class="a" style="left:606px;top:325px;width:1px;height:20px;background:#b4cae2"></div>
<div class="a" style="left:607px;top:344px;width:699px;height:1px;background:repeating-linear-gradient(90deg,#bdbdbd 0 1px,rgba(0,0,0,0.05) 1px 2px)"></div>
<div class="a g" style="left:610px;top:327px">ISIA-MINI</div>
<div class="a g" style="left:722px;top:327px">Informations Minimales</div>
<svg class="a" style="left:1036px;top:327px" width="16" height="16" viewBox="0 0 16 16"><rect x="0.9" y="0.9" width="14.2" height="14.2" fill="#fff" stroke="#4a4a4a" stroke-width="1.8"/><path d="M2.6 7.4 L6.3 11 L13.5 3.8" stroke="#505050" stroke-width="1.9" fill="none"/></svg>
<svg class="a" style="left:1103px;top:327px" width="16" height="16" viewBox="0 0 16 16"><rect x="0.9" y="0.9" width="14.2" height="14.2" fill="#fff" stroke="#4a4a4a" stroke-width="1.8"/></svg>
<svg class="a" style="left:1174px;top:327px" width="16" height="16" viewBox="0 0 16 16"><rect x="0.9" y="0.9" width="14.2" height="14.2" fill="#fff" stroke="#4a4a4a" stroke-width="1.8"/></svg>
<svg class="a" style="left:1225px;top:327px" width="16" height="16" viewBox="0 0 16 16"><rect x="0.9" y="0.9" width="14.2" height="14.2" fill="#fff" stroke="#4a4a4a" stroke-width="1.8"/><path d="M2.6 7.4 L6.3 11 L13.5 3.8" stroke="#505050" stroke-width="1.9" fill="none"/></svg>
<svg class="a" style="left:1271px;top:327px" width="16" height="16" viewBox="0 0 16 16"><rect x="0.9" y="0.9" width="14.2" height="14.2" fill="#fff" stroke="#4a4a4a" stroke-width="1.8"/><path d="M2.6 7.4 L6.3 11 L13.5 3.8" stroke="#505050" stroke-width="1.9" fill="none"/></svg>
<div class="a" style="left:718px;top:205px;width:1px;height:140px;background:repeating-linear-gradient(180deg,#bdbdbd 0 1px,rgba(0,0,0,0.05) 1px 2px)"></div>
<div class="a" style="left:1019px;top:205px;width:1px;height:140px;background:repeating-linear-gradient(180deg,#bdbdbd 0 1px,rgba(0,0,0,0.05) 1px 2px)"></div>
<div class="a" style="left:1070px;top:205px;width:1px;height:140px;background:repeating-linear-gradient(180deg,#bdbdbd 0 1px,rgba(0,0,0,0.05) 1px 2px)"></div>
<div class="a" style="left:1151px;top:205px;width:1px;height:140px;background:repeating-linear-gradient(180deg,#bdbdbd 0 1px,rgba(0,0,0,0.05) 1px 2px)"></div>
<div class="a" style="left:1212px;top:205px;width:1px;height:140px;background:repeating-linear-gradient(180deg,#bdbdbd 0 1px,rgba(0,0,0,0.05) 1px 2px)"></div>
<div class="a" style="left:1254px;top:205px;width:1px;height:140px;background:repeating-linear-gradient(180deg,#bdbdbd 0 1px,rgba(0,0,0,0.05) 1px 2px)"></div>
<div class="a" style="left:1305px;top:205px;width:1px;height:140px;background:#b8b8b8"></div>
<div class="a" style="left:607px;top:344px;width:699px;height:1px;background:#a8a8a8"></div>
<div class="a" style="left:716px;top:223px;width:305px;height:24px;border:3.6px solid #141414"></div>
<!-- RIGHT END -->

</body></html>
